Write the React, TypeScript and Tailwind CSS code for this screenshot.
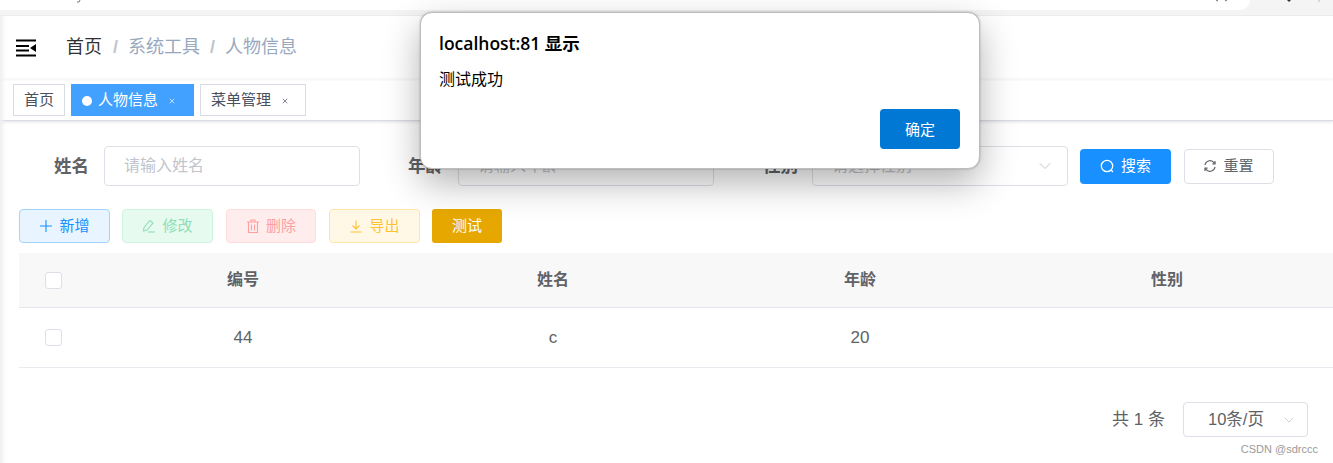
import { ChevronDown, X } from 'lucide-react';

const font = "font-['Liberation_Sans','Noto_Sans_CJK_SC',sans-serif]";

const FormLabel = ({ text, className }: { text: string; className: string }) => (
  <span className={`text-[17.5px] font-bold text-[#606266] ${className}`}>{text}</span>
);

const FormInput = ({ placeholder, select }: { placeholder: string; select?: boolean }) => (
  <div className="flex h-10 w-64 items-center justify-between rounded border border-[#dcdfe6] pl-[19px] pr-3 text-[16px] text-[#c0c4cc]">
    <span>{placeholder}</span>
    {select && <ChevronDown className="h-5 w-5 text-[#c0c4cc]" strokeWidth={1.2} />}
  </div>
);

const ToolButton = ({ label, icon, className }: { label: string; icon: React.ReactNode; className: string }) => (
  <div className={`flex h-[34px] items-center justify-center gap-[6px] rounded border text-[15px] ${className}`}>
    {icon}
    <span>{label}</span>
  </div>
);

const Checkbox = () => <div className="h-[17px] w-[17px] rounded-[3px] border border-[#dcdfe6] bg-white" />;

const tableCols = 'grid grid-cols-[69px_310px_310px_304px_310px_1fr] items-center text-center text-[#606266]';

export default function App() {
  return (
    <div className={`relative h-[463px] w-[1333px] overflow-hidden bg-white ${font}`}>
      {/* Browser bar */}
      <div className="relative h-4 border-b border-[#ececec] bg-[#f4f4f4]">
        <div className="h-[10px] w-[1250px] rounded-br-[14px] bg-white" />
        <svg className="absolute left-0 top-0 h-[4px] w-[1333px]" viewBox="0 0 1333 4">
          <path d="M80 0l-1 2h-2" stroke="#777" fill="none" />
          <path d="M1216 0l2 1M1227 0l-2 1" stroke="#666" fill="none" />
          <path d="M1287 0h4l-2 2z" fill="#333" />
          <path d="M1319 0v2" stroke="#bbb" />
        </svg>
      </div>

      {/* Navbar */}
      <div className="flex h-[63px] items-center pl-4 shadow-[0_1px_2px_rgba(0,21,41,0.05)]">
        <svg className="h-[18px] w-5" viewBox="0 0 20 18">
          <path d="M0 0.5h20v2H0zM0 6h13v2H0zM0 10.5h13v2H0zM0 15.5h20v2H0z" fill="#000" />
          <path d="M20 5v8l-6-4z" fill="#000" />
        </svg>
        <div className="ml-[30px] flex items-center text-[18px]">
          <span className="text-[#303133]">首页</span>
          <span className="ml-[11px] mr-[10px] font-bold text-[#c0c4cc]">/</span>
          <span className="text-[#97a8be]">系统工具</span>
          <span className="ml-[10px] mr-[10px] font-bold text-[#c0c4cc]">/</span>
          <span className="text-[#97a8be]">人物信息</span>
        </div>
      </div>

      {/* Tags */}
      <div className="flex h-[42px] items-start gap-[6px] border-b border-[#d8dce5] pl-[13px] pt-[5px] shadow-[0_1px_3px_rgba(0,0,0,0.12)]">
        <div className="flex h-8 w-[52px] items-center justify-center border border-[#d8dce5] pt-px text-[15px] text-[#495060]">首页</div>
        <div className="flex h-8 w-[123px] items-center bg-[#42a0ff] pl-[11px] pt-px text-[15px] text-white">
          <span className="h-[10px] w-[10px] rounded-full bg-white" />
          <span className="ml-[6px]">人物信息</span>
          <X className="ml-[10px] h-[8px] w-[8px]" strokeWidth={2} />
        </div>
        <div className="flex h-8 w-[106px] items-center border border-[#d8dce5] pl-[10px] pt-px text-[15px] text-[#495060]">
          <span>菜单管理</span>
          <X className="ml-[10px] h-[8px] w-[8px]" strokeWidth={2} />
        </div>
      </div>

      {/* Search form */}
      <div className="mt-[25px] flex h-10 items-center">
        <FormLabel text="姓名" className="ml-[54px] mr-[15px]" />
        <FormInput placeholder="请输入姓名" />
        <FormLabel text="年龄" className="ml-[48px] mr-[15px]" />
        <FormInput placeholder="请输入年龄" />
        <FormLabel text="性别" className="ml-[49px] mr-[14px]" />
        <FormInput placeholder="请选择性别" select />
        <div className="ml-3 flex h-[35px] w-[91px] items-center justify-center gap-[6px] rounded bg-[#1890ff] text-[15px] text-white">
          <svg className="h-[15px] w-[15px]" viewBox="0 0 15 15" fill="none" stroke="currentColor" strokeWidth="1.3">
            <circle cx="7" cy="7" r="5.7" />
            <path d="M11 11l2 2" />
          </svg>
          <span>搜索</span>
        </div>
        <div className="ml-[13px] flex h-[35px] w-[90px] items-center justify-center gap-[7px] rounded border border-[#dcdfe6] text-[15px] text-[#606266]">
          <svg className="h-[12px] w-[12px]" viewBox="0 0 12 12" fill="none" stroke="currentColor" strokeWidth="1.2">
            <path d="M1 5a5 5 0 0 1 8.5-2.8L11 3.5" />
            <path d="M11 7a5 5 0 0 1-8.5 2.8L1 8.5" />
            <path d="M11 1v2.8H8.4M1 11V8.2h2.6" />
          </svg>
          <span>重置</span>
        </div>
      </div>

      {/* Toolbar */}
      <div className="mt-[23px] flex items-center pl-[19px]">
        <ToolButton
          label="新增"
          className="w-[91px] border-[#a3d3ff] bg-[#e8f4ff] text-[#1890ff]"
          icon={
            <svg className="h-[14px] w-[14px]" viewBox="0 0 14 14" stroke="currentColor" strokeWidth="1.1">
              <path d="M7 1v12M1 7h12" />
            </svg>
          }
        />
        <ToolButton
          label="修改"
          className="ml-3 w-[91px] border-[#cff3e2] bg-[#e7faf0] text-[#8ce0b7]"
          icon={
            <svg className="h-[14px] w-[14px]" viewBox="0 0 14 14" fill="none" stroke="currentColor" strokeWidth="1.1">
              <path d="M1.5 12l.5-3.5L8 1.5l3 2.5-6 7z" />
              <path d="M6 13h7" />
            </svg>
          }
        />
        <ToolButton
          label="删除"
          className="ml-[13px] w-[90px] border-[#ffdbdb] bg-[#ffeded] text-[#ff9f9f]"
          icon={
            <svg className="h-[14px] w-[14px]" viewBox="0 0 14 14" fill="none" stroke="currentColor" strokeWidth="1.1">
              <path d="M1 3h12M5 3V1h4v2M2.5 3v10.5h9V3M5.5 5.5v6M8.5 5.5v6" />
            </svg>
          }
        />
        <ToolButton
          label="导出"
          className="ml-[13px] w-[91px] border-[#ffe4a8] bg-[#fff8e6] text-[#ffc233]"
          icon={
            <svg className="h-[14px] w-[14px]" viewBox="0 0 14 14" fill="none" stroke="currentColor" strokeWidth="1.1">
              <path d="M7 1.5v8M3.5 6.5L7 10l3.5-3.5M1.5 13h11" />
            </svg>
          }
        />
        <div className="ml-3 flex h-[34px] w-[70px] items-center justify-center rounded-[3px] bg-[#e6a800] text-[15px] text-white">测试</div>
      </div>

      {/* Table */}
      <div className="ml-[19px] mt-[10px]">
        <div className={`${tableCols} h-[55px] border-b border-[#e4e7ed] bg-[#f8f8f9] text-[16px] font-bold`}>
          <div className="pl-[26px]"><Checkbox /></div>
          <span>编号</span>
          <span>姓名</span>
          <span>年龄</span>
          <span>性别</span>
        </div>
        <div className={`${tableCols} h-[60px] border-b border-[#e9ebf0] text-[17px]`}>
          <div className="pl-[26px]"><Checkbox /></div>
          <span>44</span>
          <span>c</span>
          <span>20</span>
          <span />
        </div>
      </div>

      {/* Pagination */}
      <div className="mt-[34px] flex items-center justify-end pr-[25px]">
        <span className="mr-[18px] text-[17px] text-[#606266]">共 1 条</span>
        <div className="flex h-[35px] w-[125px] items-center justify-between rounded border border-[#dcdfe6] pl-6 pr-[10px] text-[16.5px] text-[#606266]">
          <span>10条/页</span>
          <ChevronDown className="h-4 w-4 text-[#c0c4cc]" strokeWidth={1.2} />
        </div>
      </div>
      <div className="mt-[5px] pr-[15px] text-right text-[11px] leading-[14px] text-[#9a9a9a]">CSDN @sdrccc</div>

      {/* Sidebar shadow on the left edge */}
      <div className="absolute bottom-0 left-0 top-4 w-[6px] bg-gradient-to-r from-[#efefef] to-transparent" />

      {/* Alert dialog */}
      <div className="absolute left-[420px] top-3 h-[157px] w-[560px] rounded-xl border border-[#bdbdbd] bg-white pl-[18px] pt-[18px] shadow-[0_14px_36px_rgba(0,0,0,0.3),0_0_2px_rgba(0,0,0,0.3)] font-['Open_Sans','Noto_Sans_CJK_SC',sans-serif]">
        <div className="text-[17.5px] font-semibold leading-6 text-black">localhost:81 显示</div>
        <div className="mt-[14px] text-[16px] leading-5 text-black">测试成功</div>
        <div className="absolute bottom-[19px] right-[19px] flex h-10 w-20 items-center justify-center rounded bg-[#0078d4] text-[15px] text-white">确定</div>
      </div>
    </div>
  );
}
